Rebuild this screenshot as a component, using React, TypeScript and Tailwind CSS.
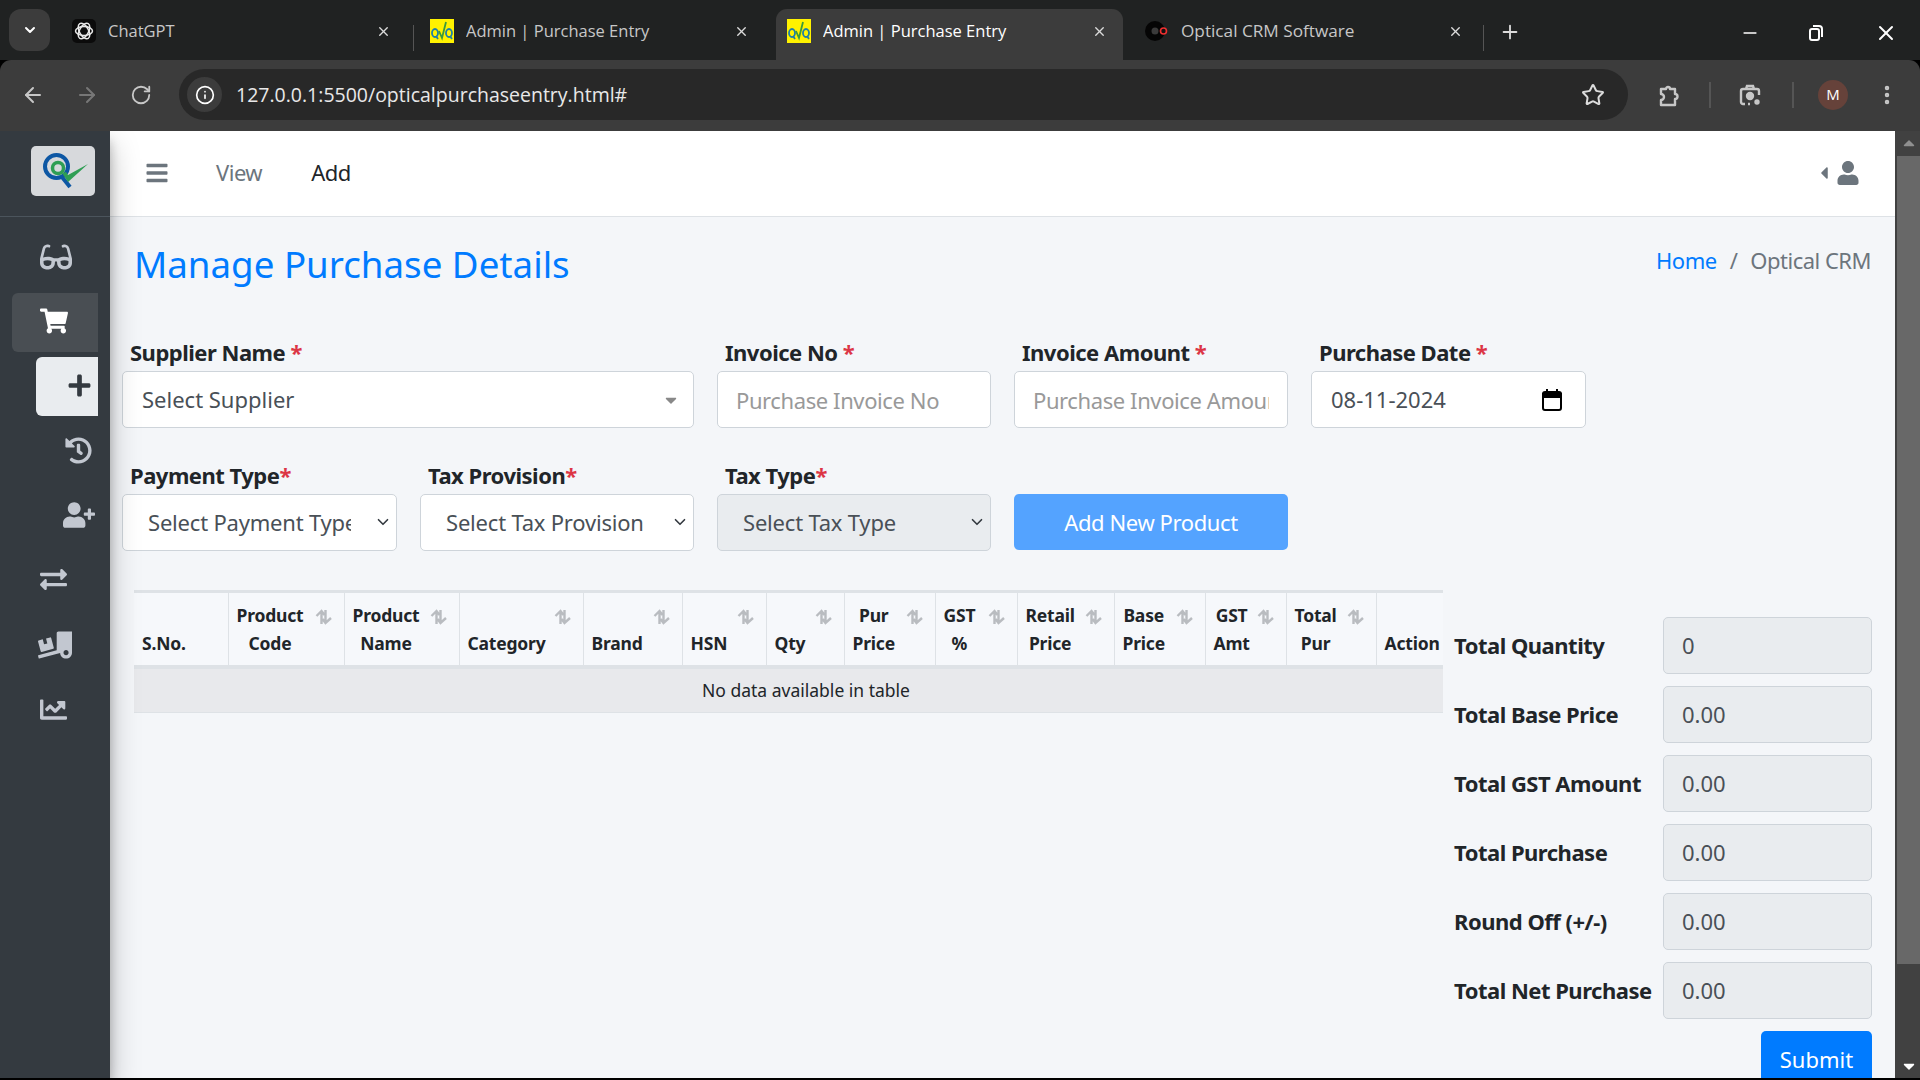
import { ReactNode } from "react";
import {
  FaBars,
  FaCaretDown,
  FaCaretLeft,
  FaChartLine,
  FaExchangeAlt,
  FaGlasses,
  FaHistory,
  FaPlus,
  FaShoppingCart,
  FaTruckLoading,
  FaUser,
  FaUserPlus,
} from "react-icons/fa";
import {
  ArrowLeft,
  ArrowRight,
  ChevronDown,
  EllipsisVertical,
  Info,
  Minus,
  Plus,
  RotateCw,
  Star,
  X,
} from "lucide-react";

const QvqIcon = () => (
  <svg width="24" height="24" viewBox="0 0 24 24" className="shrink-0">
    <rect width="24" height="24" fill="#fff200" />
    <g fill="none" stroke="#1d7fa8" strokeWidth="1.8">
      <ellipse cx="5" cy="14" rx="3" ry="4" />
      <ellipse cx="19" cy="14" rx="3" ry="4" />
      <path d="M6 17l2 3M20 17l2 3" />
    </g>
    <path d="M9 12l3 7 4-16" fill="none" stroke="#3b9b3b" strokeWidth="1.8" />
  </svg>
);

const GptIcon = () => (
  <svg width="24" height="24" viewBox="0 0 24 24" className="shrink-0">
    <rect width="24" height="24" rx="5" fill="#0b0b0b" />
    <g fill="none" stroke="#e8e8e8" strokeWidth="1.5">
      <ellipse cx="12" cy="12" rx="8.5" ry="4.5" />
      <ellipse cx="12" cy="12" rx="8.5" ry="4.5" transform="rotate(60 12 12)" />
      <ellipse cx="12" cy="12" rx="8.5" ry="4.5" transform="rotate(120 12 12)" />
    </g>
  </svg>
);

const CrmIcon = () => (
  <svg width="24" height="24" viewBox="0 0 24 24" className="shrink-0">
    <circle cx="10" cy="12" r="10" fill="#050505" />
    <circle cx="10" cy="12" r="3.5" fill="#3a3a3a" />
    <circle cx="18.5" cy="12" r="3" fill="#111" stroke="#ef3030" strokeWidth="1.6" />
  </svg>
);

const Tab = ({
  title,
  icon,
  active,
  width,
  textSize = "text-[16.5px]",
}: {
  title: string;
  icon: ReactNode;
  active?: boolean;
  width: string;
  textSize?: string;
}) => (
  <div
    className={`flex h-[51px] shrink-0 items-center rounded-t-[11px] pb-[7px] ${width} ${
      active ? "bg-[#3c3c3c] text-white" : "text-[#c7c7c7]"
    }`}
  >
    {icon}
    <span className={`ml-3 flex-1 truncate ${textSize}`}>{title}</span>
    <X size={15} strokeWidth={2.2} className="text-[#dcdcdc]" />
  </div>
);

const BrowserBar = () => (
  <div className="shrink-0 font-['Open_Sans',sans-serif]">
    <div className="flex h-[60px] items-end bg-[#202222]">
      <div className="mb-[9px] ml-[9px] flex h-[42px] w-[41px] items-center justify-center rounded-[12px] bg-[#3c3c3c] text-white">
        <ChevronDown size={16} strokeWidth={3} />
      </div>
      <div className="ml-[22px] w-[341px] shrink-0">
        <Tab title="ChatGPT" icon={<GptIcon />} width="w-[319px]" />
      </div>
      <div className="mb-[9px] h-[26px] w-px shrink-0 bg-[#555]" />
      <div className="ml-4 w-[346px] shrink-0">
        <Tab title="Admin | Purchase Entry" icon={<QvqIcon />} width="w-[319px]" />
      </div>
      <Tab title="Admin | Purchase Entry" icon={<QvqIcon />} active width="w-[347px] pl-[11px] pr-4" />
      <div className="ml-[22px] w-[338px] shrink-0">
        <Tab title="Optical CRM Software" icon={<CrmIcon />} width="w-[318px]" textSize="text-[17.2px] -ml-0.5" />
      </div>
      <div className="mb-[9px] h-[26px] w-px shrink-0 bg-[#555]" />
      <div className="mb-[17px] ml-[15px] text-[#dcdcdc]">
        <Plus size={22} strokeWidth={2} />
      </div>
      <div className="mb-[15px] ml-auto flex items-center text-white">
        <Minus size={20} strokeWidth={2} />
        <svg width="20" height="20" viewBox="0 0 20 20" className="ml-[46px]" fill="none" stroke="#fff" strokeWidth="2">
          <rect x="4" y="6" width="9" height="11" rx="2" />
          <path d="M7 3h6a3 3 0 0 1 3 3v8" />
        </svg>
        <X size={24} strokeWidth={2} className="ml-[48px] mr-[22px]" />
      </div>
    </div>
    <div className="flex h-[71px] items-start rounded-t-[11px] bg-[#3c3c3c] pt-[9px] text-[#c7c7c7]">
      <div className="flex h-[51px] items-center pl-[21px]">
        <ArrowLeft size={24} strokeWidth={2} />
        <ArrowRight size={24} strokeWidth={2} className="ml-[30px] text-[#777]" />
        <RotateCw size={22} strokeWidth={2} className="ml-[31px]" />
      </div>
      <div className="ml-[27px] flex h-[51px] w-[1449px] items-center rounded-full bg-[#282828] pl-2 text-white">
        <div className="flex h-[35px] w-[35px] items-center justify-center rounded-full bg-[#3c3c3c]">
          <Info size={20} strokeWidth={2} />
        </div>
        <span className="ml-[14px] flex-1 text-[19.5px] text-[#e8e8e8]">
          127.0.0.1:5500/opticalpurchaseentry.html#
        </span>
        <Star size={24} strokeWidth={2} className="mr-[23px] text-[#dcdcdc]" />
      </div>
      <div className="flex h-[51px] items-center text-[#c7c7c7]">
        <svg width="26" height="26" viewBox="0 0 26 26" className="ml-[27px]" fill="none" stroke="currentColor" strokeWidth="2.4">
          <path d="M6 7h5a2 2 0 1 1 4 0h5v5a2.5 2.5 0 0 1 0 5v6H6v-5a3 3 0 0 0 0-6z" strokeLinejoin="round" />
        </svg>
        <div className="ml-[28px] h-[26px] w-0.5 bg-[#555]" />
        <svg width="26" height="26" viewBox="0 0 26 26" className="ml-[26px]" fill="none" stroke="currentColor" strokeWidth="2.4">
          <path d="M8 22H6a2 2 0 0 1-2-2V9a2 2 0 0 1 2-2h14a2 2 0 0 1 2 2v4M11 22h2M9 7l1-3h6l1 3" />
          <circle cx="13" cy="14" r="3" fill="currentColor" />
          <circle cx="20" cy="20" r="1.5" fill="currentColor" />
        </svg>
        <div className="ml-[29px] h-[26px] w-0.5 bg-[#555]" />
        <div className="ml-6 flex h-[30px] w-[30px] items-center justify-center rounded-full bg-[#66423a] text-[15px] text-white">
          M
        </div>
        <EllipsisVertical size={24} strokeWidth={2.5} className="ml-[27px]" />
      </div>
    </div>
  </div>
);

const QvLogo = () => (
  <svg width="64" height="50" viewBox="0 0 64 50">
    <circle cx="25.5" cy="20.5" r="11.5" fill="none" stroke="#0d57a4" strokeWidth="4" />
    <path d="M31 31l8 10" stroke="#0d57a4" strokeWidth="4" />
    <circle cx="27" cy="22" r="5.5" fill="none" stroke="#2f9e54" strokeWidth="3.5" />
    <path d="M31 27l6 9L57 18 37 29l-2-3z" fill="#2f9e54" />
  </svg>
);

const SideIcon = ({
  children,
  variant,
  inset,
}: {
  children: ReactNode;
  variant?: "open" | "current";
  inset?: boolean;
}) => {
  const box =
    variant === "open"
      ? "ml-3 bg-[#494e53] text-white"
      : variant === "current"
        ? "ml-9 bg-[#e9ecef] text-[#343a40]"
        : "ml-3 text-[#c2c7d0]";
  return (
    <div className={`flex h-[59px] w-auto items-center rounded-l-md pb-[2px] ${box} mr-3 ${inset ? "justify-end pr-[6px]" : "pl-[28px]"}`}>
      {children}
    </div>
  );
};

const Sidebar = () => (
  <aside className="relative z-10 flex w-[110px] shrink-0 flex-col bg-[#343a40] shadow-[0_14px_28px_rgba(0,0,0,0.25),0_10px_10px_rgba(0,0,0,0.22)]">
    <div className="flex h-[86px] shrink-0 border-b border-[#4b545c] pl-[31px] pt-[15px]">
      <div className="h-[50px] w-[64px] rounded-[5px] bg-[#d7d9dc]">
        <QvLogo />
      </div>
    </div>
    <div className="flex flex-col gap-[5.7px] pt-[11px]">
      <SideIcon><FaGlasses size={32} /></SideIcon>
      <SideIcon variant="open"><FaShoppingCart size={28} /></SideIcon>
      <SideIcon variant="current" inset><FaPlus size={25} /></SideIcon>
      <SideIcon inset><FaHistory size={27} /></SideIcon>
      <SideIcon inset><FaUserPlus size={32} className="mr-[-3px]" /></SideIcon>
      <SideIcon><FaExchangeAlt size={27} /></SideIcon>
      <SideIcon><FaTruckLoading size={34} className="ml-[-2px]" /></SideIcon>
      <SideIcon><FaChartLine size={27} /></SideIcon>
    </div>
  </aside>
);

const Req = () => <span className="text-[#dc3545]">*</span>;

const Field = ({
  label,
  spaced,
  width,
  children,
}: {
  label: string;
  spaced?: boolean;
  width: string;
  children: ReactNode;
}) => (
  <div className={`shrink-0 ${width}`}>
    <div className="mb-[4px] pl-2 text-[22px] font-bold leading-[29px] tracking-[-0.5px] text-[#212529]">
      {label}
      {spaced ? " " : ""}
      <Req />
    </div>
    {children}
  </div>
);

const controlCls =
  "h-[57px] w-full rounded-[5px] border border-[#ced4da] text-[22px] text-[#495057] outline-none";

const placeholderCls = "bg-white px-[18px] tracking-[-0.4px] placeholder:text-[#999]";

const NativeSelect = ({ text, disabled }: { text: string; disabled?: boolean }) => (
  <div className="relative">
    <select
      className={`${controlCls} appearance-none pl-[25px] pr-[45px] tracking-[-0.2px] ${disabled ? "bg-[#e9ecef]" : "bg-white"}`}
      defaultValue=""
    >
      <option value="">{text}</option>
    </select>
    <ChevronDown size={18} strokeWidth={2.2} className="pointer-events-none absolute right-[5px] top-[19px] text-[#343a40]" />
  </div>
);

const columns = [
  { w: "w-[94px]", lines: ["S.No."] },
  { w: "w-[116px]", lines: ["Product", "Code"], sort: true },
  { w: "w-[115px]", lines: ["Product", "Name"], sort: true },
  { w: "w-[124px]", lines: ["Category"], sort: true },
  { w: "w-[99px]", lines: ["Brand"], sort: true },
  { w: "w-[84px]", lines: ["HSN"], sort: true },
  { w: "w-[78px]", lines: ["Qty"], sort: true },
  { w: "w-[91px]", lines: ["Pur", "Price"], sort: true },
  { w: "w-[82px]", lines: ["GST", "%"], sort: true },
  { w: "w-[97px]", lines: ["Retail", "Price"], sort: true },
  { w: "w-[91px]", lines: ["Base", "Price"], sort: true },
  { w: "w-[81px]", lines: ["GST", "Amt"], sort: true },
  { w: "w-[90px]", lines: ["Total", "Pur"], sort: true },
  { w: "w-[67px]", lines: ["Action"] },
];

const SortArrows = () => (
  <svg
    width="18"
    height="16"
    viewBox="0 0 18 16"
    fill="none"
    stroke="#b9bcc0"
    strokeWidth="2.4"
    className="absolute right-[11px] top-[16px]"
  >
    <path d="M6.5 15V2M1.5 7l5-5 3 4M10.5 1v13M7.5 10l3 4 5.5-5" />
  </svg>
);

const PurchaseTable = () => (
  <table className="w-[1309px] table-fixed border-collapse">
    <thead>
      <tr className="h-[75px] bg-[#f6f8fb]">
        {columns.map((col, i) => (
          <th
            key={i}
            className={`${col.w} relative border-x border-b-[4px] border-t-[3px] border-[#dee2e6] px-2 pb-[8px] align-bottom text-left text-[17.5px] font-bold leading-[28px] tracking-[-0.2px] text-[#212529] first:border-l-0 last:border-r-0`}
          >
            <span className="inline-block text-center">
              {col.lines[0]}
              {col.lines[1] && <br />}
              {col.lines[1]}
            </span>
            {col.sort && <SortArrows />}
          </th>
        ))}
      </tr>
    </thead>
    <tbody>
      <tr className="h-[46px] bg-[#e8e9ec]">
        <td colSpan={14} className="border-b border-[#dee2e6] pl-[35px] text-center text-[17.5px] text-[#212529]">
          No data available in table
        </td>
      </tr>
    </tbody>
  </table>
);

const totals = [
  ["Total Quantity", "0"],
  ["Total Base Price", "0.00"],
  ["Total GST Amount", "0.00"],
  ["Total Purchase", "0.00"],
  ["Round Off (+/-)", "0.00"],
  ["Total Net Purchase", "0.00"],
];

const Totals = () => (
  <div className="ml-[11px] flex w-[418px] shrink-0 flex-col gap-3 pt-[27px]">
    {totals.map(([label, value]) => (
      <div key={label} className="flex items-center">
        <div className="w-[209px] shrink-0 text-[22px] font-bold tracking-[-0.5px] text-[#212529]">{label}</div>
        <div className="flex h-[57px] w-[209px] items-center rounded-[5px] border border-[#ced4da] bg-[#e9ecef] pl-[18px] text-[22px] text-[#495057]">
          {value}
        </div>
      </div>
    ))}
    <div className="flex justify-end">
      <button className="h-[57px] w-[111px] rounded-[5px] bg-[#007bff] text-[22px] text-white">Submit</button>
    </div>
  </div>
);

const Scrollbar = () => (
  <div className="flex w-[25px] shrink-0 flex-col items-center bg-[#414141] pl-0.5">
    <div className="flex h-[25px] items-center text-[#8f8f8f]">
      <FaCaretDown size={18} className="rotate-180" />
    </div>
    <div className="h-[808px] w-full bg-[#686868]" />
    <div className="mt-auto flex h-[25px] items-center text-white">
      <FaCaretDown size={18} />
    </div>
  </div>
);

export default function App() {
  return (
    <div className="flex h-screen flex-col overflow-hidden bg-black font-['Noto_Sans',sans-serif]">
      <BrowserBar />
      <div className="flex h-[947px] shrink-0 overflow-hidden">
        <Sidebar />
        <main className="flex min-w-0 flex-1 flex-col overflow-hidden bg-[#f4f6f9]">
          <nav className="flex h-[86px] shrink-0 items-center border-b border-[#dee2e6] bg-white pb-[2px] pl-[35px] pr-[35px] text-[22px] tracking-[-0.5px]">
            <FaBars size={24} className="text-[#6c757d]" />
            <span className="ml-[47px] text-[#6c757d]">View</span>
            <span className="ml-[49px] text-[#212529]">Add</span>
            <div className="ml-auto flex items-center text-[#6c757d]">
              <FaCaretLeft size={20} />
              <FaUser size={24} className="ml-[2px]" />
            </div>
          </nav>
          <div className="flex items-start justify-between pl-[24px] pr-[24px] pt-[23px]">
            <h1 className="text-[36.7px] leading-[48px] text-[#007bff]">Manage Purchase Details</h1>
            <div className="flex gap-[13px] pt-[2px] text-[22px] leading-[36px] tracking-[-0.5px] text-[#6c757d]">
              <span className="text-[#007bff]">Home</span>
              <span>/</span>
              <span>Optical CRM</span>
            </div>
          </div>
          <div className="ml-3 mt-[50px] flex gap-[23px]">
            <Field label="Supplier Name" spaced width="w-[572px]">
              <div className={`${controlCls} flex items-center justify-between bg-white pl-[19px] pr-[13px]`}>
                Select Supplier
                <FaCaretDown size={18} className="text-[#888]" />
              </div>
            </Field>
            <Field label="Invoice No" spaced width="w-[274px]">
              <input className={`${controlCls} ${placeholderCls}`} placeholder="Purchase Invoice No" />
            </Field>
            <Field label="Invoice Amount" spaced width="w-[274px]">
              <input className={`${controlCls} ${placeholderCls}`} placeholder="Purchase Invoice Amount" />
            </Field>
            <Field label="Purchase Date" spaced width="w-[275px]">
              <div className={`${controlCls} flex items-center justify-between bg-white pl-[19px] pr-[22px]`}>
                08-11-2024
                <svg width="22" height="22" viewBox="0 0 22 22" fill="none" stroke="#000" strokeWidth="2">
                  <rect x="2" y="3" width="18" height="18" rx="2" />
                  <path d="M2 5h18v3H2z" fill="#000" />
                  <path d="M6 0v3M16 0v3" />
                </svg>
              </div>
            </Field>
          </div>
          <div className="ml-3 mt-[33px] flex gap-[23px]">
            <Field label="Payment Type" width="w-[275px]">
              <NativeSelect text="Select Payment Type" />
            </Field>
            <Field label="Tax Provision" width="w-[274px]">
              <NativeSelect text="Select Tax Provision" />
            </Field>
            <Field label="Tax Type" width="w-[274px]">
              <NativeSelect text="Select Tax Type" disabled />
            </Field>
            <div className="w-[274px] shrink-0 pt-[33px]">
              <button className="h-[56px] w-full rounded-[5px] bg-[#54a3ff] text-[22px] tracking-[-0.4px] text-white">Add New Product</button>
            </div>
          </div>
          <div className="ml-6 mt-[39px] flex items-start">
            <PurchaseTable />
            <Totals />
          </div>
        </main>
        <Scrollbar />
      </div>
    </div>
  );
}
